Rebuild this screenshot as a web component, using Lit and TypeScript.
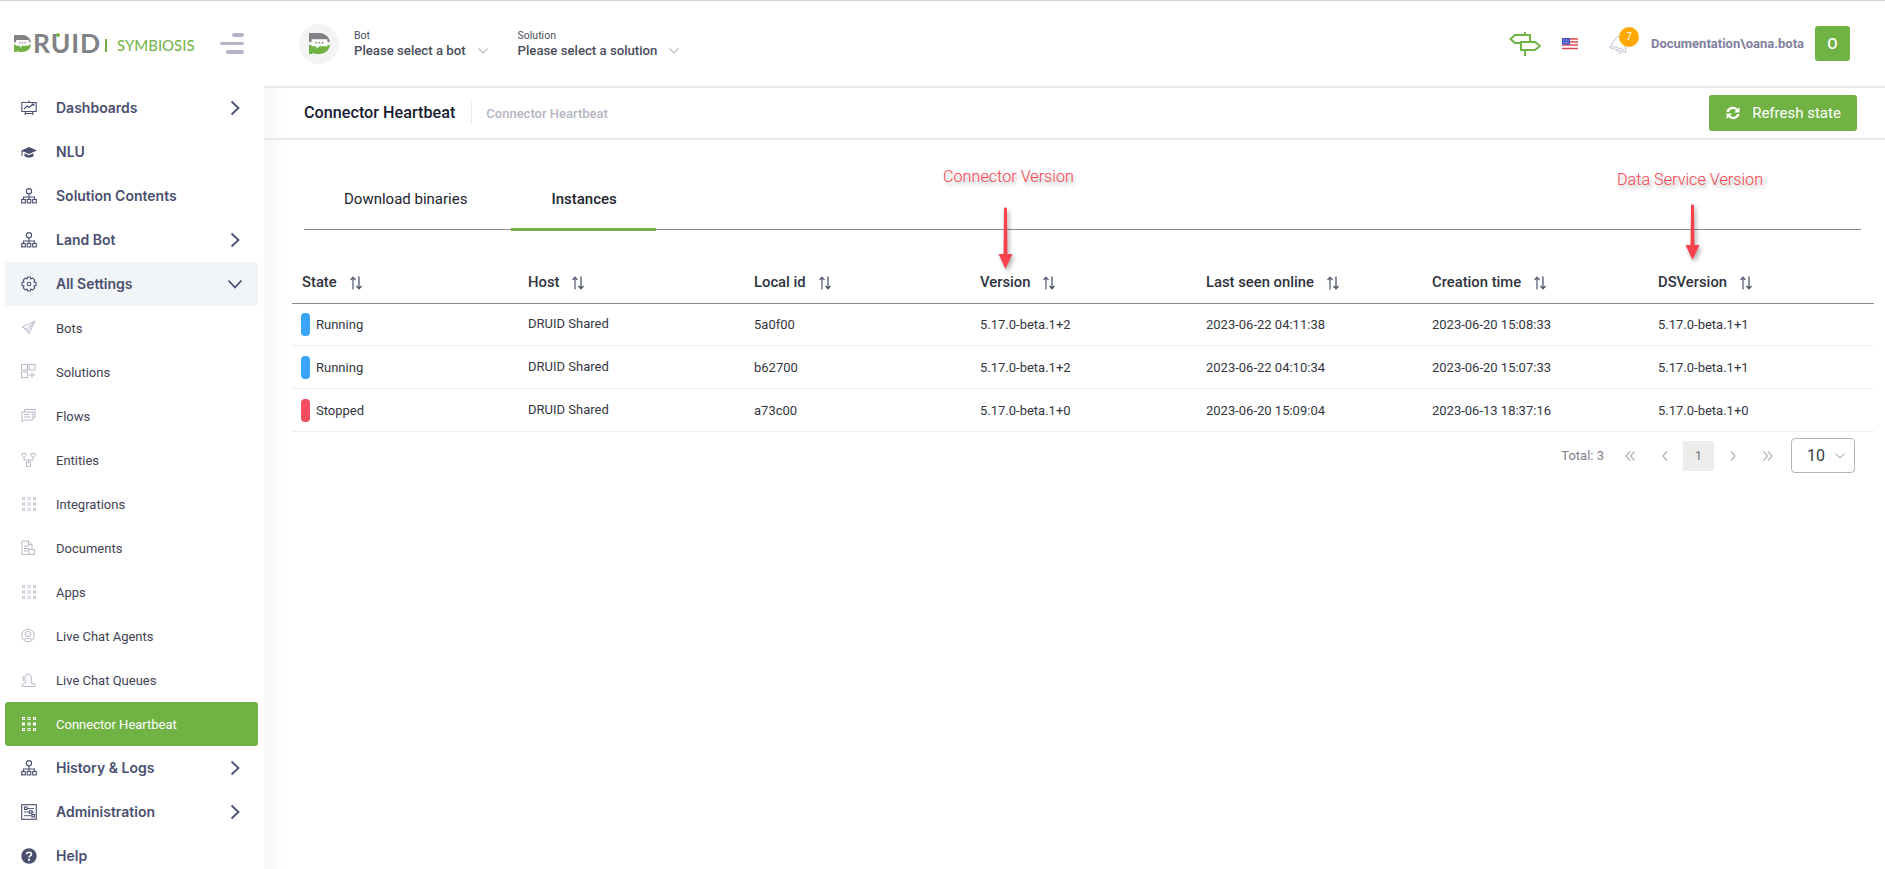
import { LitElement, html, css, svg } from "lit";
import { customElement } from "lit/decorators.js";

const grey = "#b7b9c7";
const dark = "#4a4f70";

const dots = (c: string) => svg`<g fill="none" stroke="${c}" stroke-width="1">${[1.5, 7, 12.5].map((x) =>
  [1.5, 7, 12.5].map((y) => svg`<rect x="${x}" y="${y}" width="2" height="2"/>`)
)}</g>`;

const hierarchy = (c: string) => svg`<g fill="none" stroke="${c}" stroke-width="1.1"><circle cx="8" cy="3.2" r="2.6"/><path d="M8 5.8V9M2.5 11.5V9H13.5V11.5M8 9V11.5"/><rect x=".7" y="11.5" width="3.6" height="3.4"/><rect x="6.2" y="11.5" width="3.6" height="3.4"/><rect x="11.7" y="11.5" width="3.6" height="3.4"/></g>`;

const icons: Record<string, unknown> = {
  dash: svg`<g fill="none" stroke="${dark}" stroke-width="1.1"><path d="M.8 2.5H15.2V11.5H.8ZM.5 2.5H15.5M8 .5V2.5M4.5 11.5L4 15M11.5 11.5L12 15M4 13.5H12"/><path d="M3 9L6 6L8 7.5L12.5 4M10.5 4H12.8V6"/></g>`,
  nlu: svg`<g fill="${dark}"><path d="M8 3L16 6.5L8 10L2.5 7.6L1.5 8V12H.5V6.6Z"/><path d="M3.5 9.3L8 11.2L12.5 9.3V12.3C10 14 6 14 3.5 12.3Z"/></g>`,
  tree: hierarchy(dark),
  gear: svg`<g fill="none" stroke="${dark}" stroke-width="1.1"><path d="M6.6 1H9.4L9.9 3L11.8 2.1L13.8 4.1L12.9 6L15 6.6V9.4L12.9 10L13.8 11.9L11.8 13.9L9.9 13L9.4 15H6.6L6.1 13L4.2 13.9L2.2 11.9L3.1 10L1 9.4V6.6L3.1 6L2.2 4.1L4.2 2.1L6.1 3Z" stroke-linejoin="round"/><circle cx="8" cy="8" r="1.8"/></g>`,
  bots: svg`<g fill="none" stroke="${grey}" stroke-width=".9"><path d="M14 1L1 7L5.5 9L8 14L14 1ZM14 1L5.5 9M14 1L6.5 12M3 8L7 12"/></g>`,
  sols: svg`<g fill="none" stroke="${grey}" stroke-width="1"><rect x=".5" y=".5" width="6" height="5.5"/><rect x="8" y=".5" width="6" height="5.5"/><rect x=".5" y="8" width="6" height="5.5"/><path d="M8 11H14M11 8.5V14"/></g>`,
  flows: svg`<g fill="none" stroke="${grey}" stroke-width="1"><path d="M1 4H12V12H3L1 14ZM3.5 4V1.5H14V9.5H12M3 6.5H8M3 9H9.5"/></g>`,
  ents: svg`<g fill="none" stroke="${grey}" stroke-width="1"><path d="M1 1.5H5V3.5L3 5.5L1 3.5ZM10 1.5H14V3.5L12 5.5L10 3.5ZM3 5.5V8H12V5.5M7.5 8V10M5.5 10H9.5V14.5H5.5Z"/></g>`,
  dots: dots("#c4c6d1"),
  docs: svg`<g fill="none" stroke="${grey}" stroke-width="1"><path d="M1 1H7.5L11 4.5V14.5H1ZM7.5 1V4.5H11M3 6H8M3 8.5H8M3 11H7"/><rect x="8" y="9.5" width="5.5" height="5" fill="#fff"/></g>`,
  agent: svg`<g fill="none" stroke="${grey}" stroke-width="1"><circle cx="7" cy="7.5" r="6.3"/><circle cx="7" cy="6" r="2.6"/><path d="M2.8 12.3C3.3 9.8 10.7 9.8 11.2 12.3"/></g>`,
  queue: svg`<g fill="none" stroke="${grey}" stroke-width="1"><path d="M1 14.5V12.5L4.5 11V9C3.5 7.5 3.5 2 7 2S11 7.5 10 9V11L14 12.5V14.5ZM3 3.5C1.5 5 2 8 2.8 9"/></g>`,
  active: dots("#ffffff"),
  admin: svg`<g fill="none" stroke="${dark}" stroke-width="1.1"><rect x=".7" y=".7" width="14.6" height="14.6"/><path d="M3 4.5H13M3 8H13M3 11.7H13" stroke-width=".9"/><rect x="3.5" y="3" width="2.5" height="2.5" fill="#fff"/><rect x="8.5" y="6.8" width="2.5" height="2.5" fill="#fff"/><rect x="11" y="10.5" width="2.5" height="2.5" fill="#fff"/></g>`,
  help: svg`<circle cx="8" cy="8" r="7.7" fill="${dark}"/><path d="M5.6 6.2C5.8 3.6 10.4 3.6 10.4 6.2C10.4 8 8 7.8 8 9.6" fill="none" stroke="#fff" stroke-width="1.7"/><rect x="7" y="10.8" width="2" height="2" fill="#fff"/>`,
};

type Nav = { label: string; icon: string; kind: "parent" | "child"; chev?: "right" | "down"; cls?: string };
const nav: Nav[] = [
  { label: "Dashboards", icon: "dash", kind: "parent", chev: "right" },
  { label: "NLU", icon: "nlu", kind: "parent" },
  { label: "Solution Contents", icon: "tree", kind: "parent" },
  { label: "Land Bot", icon: "tree", kind: "parent", chev: "right" },
  { label: "All Settings", icon: "gear", kind: "parent", chev: "down", cls: "open" },
  { label: "Bots", icon: "bots", kind: "child" },
  { label: "Solutions", icon: "sols", kind: "child" },
  { label: "Flows", icon: "flows", kind: "child" },
  { label: "Entities", icon: "ents", kind: "child" },
  { label: "Integrations", icon: "dots", kind: "child" },
  { label: "Documents", icon: "docs", kind: "child" },
  { label: "Apps", icon: "dots", kind: "child" },
  { label: "Live Chat Agents", icon: "agent", kind: "child" },
  { label: "Live Chat Queues", icon: "queue", kind: "child" },
  { label: "Connector Heartbeat", icon: "active", kind: "child", cls: "active" },
  { label: "History & Logs", icon: "tree", kind: "parent", chev: "right" },
  { label: "Administration", icon: "admin", kind: "parent", chev: "right" },
  { label: "Help", icon: "help", kind: "parent" },
];

const cols = ["State", "Host", "Local id", "Version", "Last seen online", "Creation time", "DSVersion"];
const rows = [
  ["Running", "DRUID Shared", "5a0f00", "5.17.0-beta.1+2", "2023-06-22 04:11:38", "2023-06-20 15:08:33", "5.17.0-beta.1+1"],
  ["Running", "DRUID Shared", "b62700", "5.17.0-beta.1+2", "2023-06-22 04:10:34", "2023-06-20 15:07:33", "5.17.0-beta.1+1"],
  ["Stopped", "DRUID Shared", "a73c00", "5.17.0-beta.1+0", "2023-06-20 15:09:04", "2023-06-13 18:37:16", "5.17.0-beta.1+0"],
];

const botMark = (w: number, h: number) => html`<svg width="${w}" height="${h}" viewBox="0 0 20 20">
  <path d="M0 0H10C15 0 19 3.5 20 8.5H0Z" fill="#808285"/>
  <path d="M0 11.5H20C19.5 16.5 15 20 10 20H6L3.5 18.5V20H0Z" fill="#70b244"/>
  <path d="M2.5 6H17.5V12.5H10L7 15V12.5H2.5Z" fill="#fff"/>
  <g fill="#808285"><circle cx="7" cy="9.2" r=".9"/><circle cx="10" cy="9.2" r=".9"/><circle cx="13" cy="9.2" r=".9"/></g>
</svg>`;

const chevDown = html`<svg class="cd" width="12" height="8" viewBox="0 0 12 8"><path d="M1.5 1.5L6 6L10.5 1.5" fill="none" stroke="#b9bcc6" stroke-width="1.2"/></svg>`;

const sortIcon = html`<svg class="sort" width="14" height="14" viewBox="0 0 14 14"><path d="M4 13.5V1.5M1.5 4L4 1.2L6.5 4" fill="none" stroke="#5b6478" stroke-width="1.3"/><path d="M10 .5V12.5M7.5 10L10 12.8L12.5 10" fill="none" stroke="#4d5564" stroke-width="1.3"/></svg>`;

const navIcon = (d: string) => html`<svg width="10" height="12" viewBox="0 0 10 12"><path d="${d}" fill="none" stroke="#b0b2b8" stroke-width="1.2"/></svg>`;

@customElement("app-root")
export class AppRoot extends LitElement {
  static styles = css`
    :host {
      display: block;
      position: relative;
      width: 1885px;
      height: 869px;
      overflow: hidden;
      background: #fff;
      border-top: 1px solid #cfcfcf;
      box-sizing: border-box;
      font-family: Roboto, "Liberation Sans", sans-serif;
      color: #3f4254;
    }
    .shell { display: grid; grid-template-columns: 264px 1fr; height: 868px; }

    .side { display: flex; flex-direction: column; background: #fff; overflow: hidden; }
    .logo { height: 85px; flex: none; display: flex; align-items: center; padding-left: 14px; box-sizing: border-box; }
    .logo-mark { display: flex; align-items: center; width: 81px; flex: none; color: #808285; font-family: Lato, sans-serif; font-size: 26.5px; font-weight: 700; letter-spacing: .9px; line-height: 1; position: relative; }
    .logo-mark svg { margin-right: 2px; flex: none; }
    .u-dot { position: absolute; left: 42px; top: 3px; width: 4px; height: 4px; border-radius: 50%; background: #70b244; }
    .logo-sep { width: 2px; height: 13px; background: #70b244; margin: 3px 10px 0 10px; flex: none; }
    .logo-sub { color: #70b244; font-family: Lato, sans-serif; font-size: 15px; margin-top: 3px; width: 77px; flex: none; white-space: nowrap; }
    .burger { display: flex; flex-direction: column; align-items: flex-end; gap: 5px; margin-left: 26px; width: 24px; flex: none; }
    .burger i { display: block; height: 3.5px; background: #b5b5c8; border-radius: 2px; }
    .burger i:nth-child(1) { width: 12px; }
    .burger i:nth-child(2) { width: 24px; }
    .burger i:nth-child(3) { width: 18px; }

    .item { height: 44px; flex: none; margin: 0 5px; width: 253px; padding-left: 16px; box-sizing: border-box; display: flex; align-items: center; border-radius: 3px; }
    .ico { width: 35px; flex: none; display: flex; align-items: center; }
    .parent .lbl { font-family: Inter, sans-serif; font-weight: 600; font-size: 14px; color: #4a4f70; padding-bottom: 2px; }
    .child .lbl { font-size: 13px; color: #3f4254; }
    .lbl { flex: 1; white-space: nowrap; }
    .chev { width: 24px; margin-right: 11px; display: flex; justify-content: center; }
    .open { background: #f2f5f8; }
    .active { background: #70b244; }
    .child.active .lbl { color: #fff; }

    .main { display: flex; flex-direction: column; min-width: 0; }
    .top { height: 85px; flex: none; border-bottom: 2px solid #e6eaef; display: flex; align-items: center; padding-left: 35px; padding-right: 35px; }
    .bot-av { width: 40px; height: 40px; border-radius: 50%; background: #f4f4f4; display: flex; align-items: center; justify-content: center; margin-right: 15px; flex: none; }
    .pick { display: flex; flex-direction: column; margin-right: 29px; }
    .pick small { font-size: 10.5px; color: #4a4d5c; line-height: 13px; margin-bottom: 1px; }
    .pick b { font-size: 13.2px; font-weight: 500; color: #4a4d5c; line-height: 15px; white-space: nowrap; }
    .pick .cd { margin-left: 11px; }
    .grow { flex: 1; }
    .sign { margin-right: 21px; display: block; }
    .flag { margin-right: 31px; display: block; }
    .bell { position: relative; width: 22px; height: 24px; margin-right: 20px; }
    .badge { position: absolute; left: 10px; top: -5px; width: 20px; height: 20px; border-radius: 50%; background: #ffa800; color: #fff; font-size: 10px; display: flex; align-items: center; justify-content: center; }
    .user { font-size: 13px; font-weight: 700; color: #7f819e; margin-right: 11px; white-space: nowrap; }
    .avatar { width: 35px; height: 35px; border-radius: 3px; background: #70b244; color: #fff; display: flex; align-items: center; justify-content: center; font-size: 15px; font-weight: 500; }

    .sub { height: 50px; flex: none; border-bottom: 2px solid #e6eaef; display: flex; align-items: center; padding: 0 28px 0 40px; background: linear-gradient(90deg, #f8f8f8, #fff 20px); }
    .title { font-size: 16.2px; font-weight: 500; color: #181c32; line-height: 22px; padding-right: 16px; border-right: 1px solid #e6eaef; white-space: nowrap; }
    .crumb { font-size: 13px; font-weight: 500; color: #b5b5c3; margin-left: 14px; }
    .refresh { display: flex; align-items: center; gap: 11px; width: 148px; height: 36px; justify-content: center; background: #70b244; color: #fff; font-size: 15px; border-radius: 3px; border: 0; font-family: inherit; }

    .content { flex: 1; background: linear-gradient(90deg, #f8f8f8, #fff 20px); padding: 34px 11px 0 28px; }
    .tabs { display: flex; margin: 0 13px 0 12px; border-bottom: 1px solid #8a8a8a; height: 56px; box-sizing: border-box; }
    .tab { padding: 0 40px; font-size: 15px; line-height: 50px; white-space: nowrap; color: #22252f; height: 56px; box-sizing: border-box; }
    .tab.on { font-weight: 500; border-bottom: 3px solid #70b244; margin-left: 4px; width: 145px; height: 57px; }
    .row { display: grid; grid-template-columns: repeat(7, 226px); }
    .head { margin-top: 30px; margin-bottom: -1px; height: 44px; border-bottom: 1px solid #8a8a8a; box-sizing: border-box; align-items: center; }
    .head div { padding-left: 10px; font-size: 14.8px; font-weight: 500; color: #2f3340; display: flex; align-items: center; gap: 12px; }
    .sort { margin-top: 2px; }
    .data { height: 43px; border-bottom: 1px solid #eeeeee; box-sizing: border-box; align-items: center; font-size: 13px; color: #34363f; }
    .data div { padding-left: 10px; white-space: nowrap; }
    .data div:nth-child(2) { padding-bottom: 2px; }
    .data .state { display: flex; align-items: center; gap: 6px; padding-left: 9px; }
    .pill { width: 9px; height: 23px; border-radius: 4px; flex: none; }
    .run { background: #38a4f8; }
    .stop { background: #f64e60; }
    .pager { display: flex; align-items: center; justify-content: flex-end; padding-right: 19px; height: 45px; margin-top: 1px; font-size: 13px; color: #7e8299; }
    .total { margin-right: 8px; color: #80808f; }
    .pn { width: 35px; height: 30px; display: flex; align-items: center; justify-content: center; }
    .cur { width: 31px; height: 30px; background: #eeecea; color: #71757f; display: flex; align-items: center; justify-content: center; border-radius: 2px; font-size: 13px; margin: 0 1px; }
    .size { margin-left: 6px; width: 64px; height: 35px; box-sizing: border-box; border: 1px solid #b5b5b5; border-radius: 4px; display: flex; align-items: center; padding-left: 15px; gap: 9px; font-size: 16px; color: #3a3d48; }

    .note { position: absolute; color: #f8434e; font-size: 16.2px; font-weight: 300; text-shadow: 2px 3px 4px rgba(0, 0, 0, .35); white-space: nowrap; line-height: 20px; }
    .arrow { position: absolute; filter: drop-shadow(2px 3px 2px rgba(0, 0, 0, .3)); }
  `;

  render() {
    return html`
      <div class="shell">
        <aside class="side">
          <div class="logo">
            <div class="logo-mark">
              ${botMark(17, 19)}<span>RUID</span><i class="u-dot"></i>
            </div>
            <i class="logo-sep"></i>
            <span class="logo-sub">SYMBIOSIS</span>
            <div class="burger"><i></i><i></i><i></i></div>
          </div>
          ${nav.map(
            (n) => html`<div class="item ${n.kind} ${n.cls ?? ""}">
              <span class="ico"><svg width="16" height="16" viewBox="0 0 16 16">${icons[n.icon]}</svg></span>
              <span class="lbl">${n.label}</span>
              ${n.chev
                ? html`<span class="chev">${n.chev === "right"
                    ? html`<svg width="10" height="16" viewBox="0 0 10 16"><path d="M1.5 1.5L8.5 8L1.5 14.5" fill="none" stroke="${dark}" stroke-width="1.8"/></svg>`
                    : html`<svg width="16" height="10" viewBox="0 0 16 10"><path d="M1.5 1.5L8 8.5L14.5 1.5" fill="none" stroke="${dark}" stroke-width="1.8"/></svg>`}</span>`
                : ""}
            </div>`
          )}
        </aside>
        <div class="main">
          <header class="top">
            <span class="bot-av">${botMark(21, 23)}</span>
            <div class="pick"><small>Bot</small><b>Please select a bot${chevDown}</b></div>
            <div class="pick"><small>Solution</small><b>Please select a solution${chevDown}</b></div>
            <span class="grow"></span>
            <svg class="sign" width="32" height="24" viewBox="0 0 32 24"><path d="M16 0V24" stroke="#70b244" stroke-width="2"/><path d="M1.5 7L6 3H21V11H6Z" fill="#fff" stroke="#70b244" stroke-width="2"/><path d="M12 10H26L31 14L26 18H12Z" fill="#fff" stroke="#70b244" stroke-width="2"/></svg>
            <svg class="flag" width="16" height="12" viewBox="0 0 16 12"><rect width="16" height="12" fill="#fff"/><path d="M0 1H16M0 4H16M0 7H16M0 10.5H16" stroke="#e2474c" stroke-width="1.5"/><rect width="8" height="6.5" fill="#3f51c4"/><g fill="#fff"><circle cx="2" cy="2" r=".5"/><circle cx="4" cy="2" r=".5"/><circle cx="6" cy="2" r=".5"/><circle cx="2" cy="4.5" r=".5"/><circle cx="4" cy="4.5" r=".5"/><circle cx="6" cy="4.5" r=".5"/></g></svg>
            <div class="bell">
              <svg width="22" height="24" viewBox="0 0 22 24"><g fill="none" stroke="#c3c4d2" stroke-width="1"><path d="M.5 15.5L7 6C9 3 14 4 15 8L17 20.5Z"/><path d="M2.5 14L15.5 18"/><path d="M7.5 18C8 21 12 22 13 19.5"/></g></svg>
              <span class="badge">7</span>
            </div>
            <span class="user">Documentation\\oana.bota</span>
            <span class="avatar">O</span>
          </header>
          <div class="sub">
            <span class="title">Connector Heartbeat</span>
            <span class="crumb">Connector Heartbeat</span>
            <span class="grow"></span>
            <button class="refresh">
              <svg width="16" height="16" viewBox="0 0 16 16"><path d="M1.5 7C2 2 9 0 12.5 4L14.5 2V7.5H9L11 5.5C8.5 3 5 4 4 7ZM14.5 9C14 14 7 16 3.5 12L1.5 14V8.5H7L5 10.5C7.5 13 11 12 12 9Z" fill="#fff"/></svg>
              Refresh state
            </button>
          </div>
          <div class="content">
            <div class="tabs">
              <div class="tab">Download binaries</div>
              <div class="tab on">Instances</div>
            </div>
            <div class="row head">${cols.map((c) => html`<div>${c}${sortIcon}</div>`)}</div>
            ${rows.map(
              (r) => html`<div class="row data">
                <div class="state"><i class="pill ${r[0] === "Running" ? "run" : "stop"}"></i>${r[0]}</div>
                ${r.slice(1).map((v) => html`<div>${v}</div>`)}
              </div>`
            )}
            <div class="pager">
              <span class="total">Total: 3</span>
              <span class="pn">${navIcon("M5 1.5L1 6L5 10.5M9.5 1.5L5.5 6L9.5 10.5")}</span>
              <span class="pn">${navIcon("M7 1.5L3 6L7 10.5")}</span>
              <span class="cur">1</span>
              <span class="pn">${navIcon("M3 1.5L7 6L3 10.5")}</span>
              <span class="pn">${navIcon("M.5 1.5L4.5 6L.5 10.5M5 1.5L9 6L5 10.5")}</span>
              <div class="size">10 ${chevDown}</div>
            </div>
          </div>
        </div>
      </div>
      <span class="note" style="left:943px;top:166px">Connector Version</span>
      <svg class="arrow" style="left:998px;top:205px" width="15" height="64" viewBox="0 0 15 64"><path d="M6 2.5C6 1 9 1 9 2.5L9.5 48H14.5L7.5 63L.5 48H5.5Z" fill="#f8434e"/></svg>
      <span class="note" style="left:1617px;top:169px">Data Service Version</span>
      <svg class="arrow" style="left:1685px;top:202px" width="15" height="58" viewBox="0 0 15 58"><path d="M6 2.5C6 1 9 1 9 2.5L9.5 42H14.5L7.5 57L.5 42H5.5Z" fill="#f8434e"/></svg>
    `;
  }
}
